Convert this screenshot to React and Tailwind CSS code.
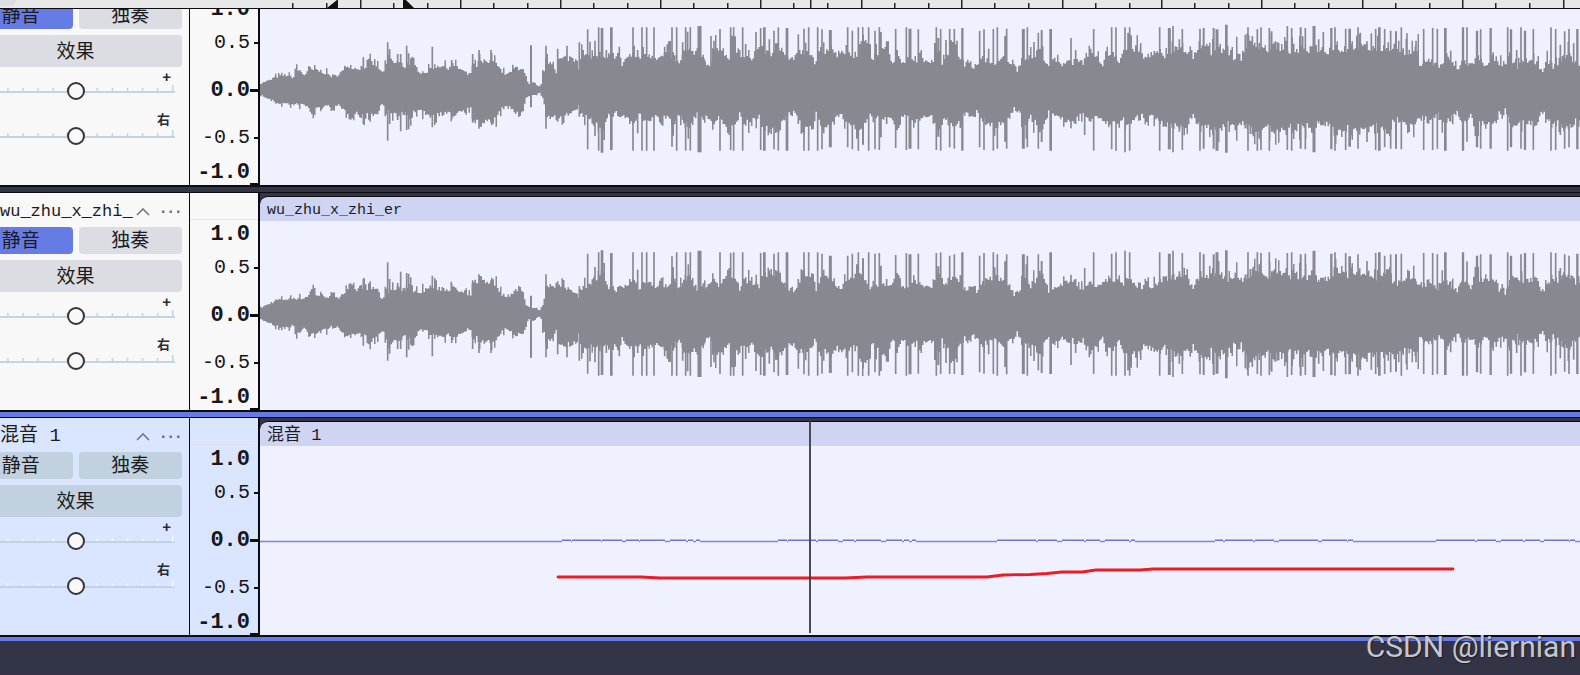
import clsx from 'clsx'

// Waveform sections, in thirds of a pixel. Silence sits at y = MID.
// top / bottom are [x, y] envelopes, hits are [x, top, bottom, width] peaks.
const MID = 267
const SECTIONS = [
  {
    start: -15,
    end: 1350,
    top: [[15, 250], [45, 240], [60, 230], [90, 225], [115, 232], [118, 204], [135, 214], [145, 225], [160, 210], [180, 210], [200, 214], [220, 225], [235, 232], [250, 220], [265, 212], [275, 192], [300, 205], [325, 200], [345, 187], [365, 195], [378, 220], [390, 200], [404, 170], [412, 190], [425, 186], [450, 200], [465, 182], [478, 200], [495, 215], [515, 215], [530, 200], [560, 195], [570, 205], [590, 194], [610, 205], [635, 222], [642, 232], [650, 192], [660, 200], [672, 182], [690, 195], [708, 178], [725, 185], [735, 210], [755, 225], [765, 215], [780, 203], [800, 203], [815, 245], [822, 255], [835, 248], [850, 262], [858, 248], [862, 215], [875, 185], [895, 185], [900, 222], [908, 182], [935, 172], [965, 175], [968, 212], [975, 150], [985, 160], [995, 175], [1010, 158], [1025, 168], [1050, 180], [1065, 172], [1085, 158], [1098, 195], [1110, 175], [1130, 162], [1150, 172], [1165, 158], [1190, 165], [1215, 175], [1235, 155], [1255, 168], [1272, 198], [1280, 158], [1310, 155], [1328, 180], [1340, 160], [1350, 170]],
    bottom: [[15, 285], [45, 300], [60, 308], [90, 312], [118, 316], [145, 315], [160, 325], [175, 356], [182, 325], [220, 320], [250, 320], [265, 332], [275, 342], [300, 338], [325, 355], [345, 342], [365, 345], [378, 310], [390, 330], [412, 342], [425, 350], [450, 340], [465, 356], [478, 335], [500, 338], [530, 350], [560, 345], [590, 345], [620, 330], [642, 320], [655, 360], [675, 375], [690, 365], [710, 368], [725, 355], [740, 325], [770, 325], [790, 350], [800, 340], [812, 295], [822, 286], [835, 285], [855, 278], [862, 300], [875, 360], [885, 355], [905, 358], [925, 345], [955, 340], [968, 320], [980, 355], [1000, 358], [1020, 372], [1045, 385], [1060, 345], [1085, 342], [1110, 350], [1130, 375], [1150, 345], [1175, 375], [1195, 345], [1215, 368], [1235, 345], [1250, 388], [1270, 342], [1290, 382], [1310, 375], [1325, 340], [1350, 370]],
    hits: [[325, 172, 372], [398, 127, 422, 5], [404, 148, 372], [428, 162, 360], [437, 162, 394], [455, 137, 390], [461, 160, 388], [532, 140, 382], [590, 180, 358], [653, 162, 368], [672, 150, 386], [708, 150, 368, 5], [828, 136, 322, 6], [873, 137, 386], [908, 146, 360], [936, 137, 340], [973, 127, 350], [998, 88, 448], [1005, 125, 358], [1020, 122, 408], [1031, 82, 452], [1041, 84, 458, 8], [1054, 150, 350], [1069, 82, 450, 8], [1093, 140, 345], [1134, 82, 452], [1148, 150, 400], [1161, 82, 452], [1175, 82, 452], [1197, 82, 452], [1229, 140, 345], [1251, 82, 440], [1265, 82, 452], [1283, 127, 360], [1292, 82, 452], [1298, 95, 380], [1306, 82, 452], [1333, 78, 457, 11]],
  },
  {
    start: 1320,
    end: 1320,
    top: [[0, 165], [28, 200], [40, 150], [60, 132], [80, 180], [95, 142], [120, 160], [150, 178], [170, 145], [200, 152], [220, 160], [245, 140], [270, 180], [290, 160], [320, 155], [348, 190], [370, 152], [390, 130], [405, 165], [420, 147], [450, 165], [470, 155], [490, 112], [504, 120], [510, 180], [530, 156], [560, 150], [575, 190], [590, 148], [610, 198], [630, 165], [650, 176], [670, 175], [690, 195], [710, 142], [725, 185], [750, 150], [770, 158], [790, 200], [800, 180], [825, 208], [835, 175], [850, 175], [870, 190], [890, 195], [910, 170], [930, 185], [950, 208], [965, 168], [980, 170], [1000, 168], [1020, 148], [1045, 200], [1060, 175], [1080, 195], [1100, 178], [1113, 190], [1130, 165], [1145, 205], [1160, 180], [1175, 150], [1190, 180], [1205, 192], [1215, 162], [1240, 156], [1255, 182], [1270, 150], [1300, 142], [1320, 150]],
    bottom: [[0, 340], [40, 365], [60, 348], [65, 378], [90, 398], [100, 380], [120, 342], [130, 376], [150, 360], [180, 352], [185, 390], [210, 398], [240, 385], [260, 345], [280, 335], [300, 368], [340, 385], [347, 330], [355, 372], [400, 380], [405, 345], [430, 355], [450, 382], [480, 385], [500, 370], [510, 345], [540, 355], [570, 345], [590, 395], [613, 335], [640, 382], [660, 350], [690, 350], [710, 395], [730, 355], [755, 388], [780, 355], [800, 342], [820, 362], [828, 325], [840, 358], [880, 378], [920, 360], [942, 325], [960, 345], [975, 385], [990, 352], [1020, 395], [1045, 338], [1080, 345], [1110, 380], [1140, 338], [1165, 366], [1185, 345], [1220, 375], [1260, 360], [1290, 375], [1320, 340]],
    hits: [[2, 78, 457], [33, 108, 350], [42, 122, 370], [60, 87, 452], [92, 82, 450], [101, 82, 452], [128, 82, 452], [137, 132, 370], [168, 96, 362], [182, 84, 450], [193, 82, 452, 8], [208, 118, 398], [222, 92, 448], [235, 82, 452], [261, 84, 452, 8], [295, 103, 368], [312, 86, 452], [326, 82, 452], [353, 82, 452], [366, 88, 448], [391, 90, 442, 9], [443, 82, 442], [457, 92, 448], [475, 82, 452], [489, 104, 434, 6], [506, 82, 452], [525, 92, 448], [538, 82, 450], [543, 96, 412], [560, 124, 372], [587, 87, 444], [619, 82, 450], [630, 86, 446, 9], [655, 88, 448], [709, 82, 450], [715, 114, 410, 6], [722, 87, 452], [738, 120, 360], [749, 87, 442], [763, 87, 446], [771, 122, 365], [787, 84, 452, 7], [839, 92, 442], [852, 88, 450], [866, 146, 370], [880, 87, 452], [892, 82, 446], [915, 108, 425], [920, 86, 446], [970, 87, 446, 9], [982, 82, 442], [1002, 126, 362], [1015, 98, 446], [1025, 90, 426, 6], [1052, 87, 452, 8], [1113, 114, 385], [1127, 150, 372], [1154, 175, 405], [1172, 146, 365], [1181, 87, 452], [1235, 82, 448], [1248, 82, 452], [1275, 82, 457], [1284, 98, 372], [1289, 82, 452]],
  },
  {
    start: 2640,
    end: 1325,
    top: [[0, 140], [10, 180], [25, 160], [55, 162], [64, 180], [80, 147], [110, 142], [135, 160], [150, 132], [158, 185], [175, 147], [200, 135], [210, 160], [235, 120], [245, 150], [260, 142], [280, 175], [290, 145], [302, 176], [312, 135], [345, 127], [380, 150], [400, 132], [430, 145], [463, 152], [480, 146], [510, 145], [540, 147], [560, 150], [590, 132], [600, 150], [640, 132], [660, 142], [690, 146], [720, 142], [750, 136], [780, 150], [820, 158], [832, 132], [838, 198], [850, 180], [875, 185], [895, 200], [920, 175], [955, 208], [965, 180], [990, 195], [1010, 172], [1035, 195], [1050, 170], [1065, 182], [1095, 200], [1105, 175], [1130, 200], [1150, 172], [1170, 185], [1190, 190], [1205, 210], [1220, 180], [1240, 200], [1260, 176], [1285, 157], [1300, 185], [1325, 205]],
    bottom: [[0, 330], [12, 372], [28, 338], [55, 366], [90, 382], [120, 388], [140, 370], [158, 350], [180, 385], [210, 378], [235, 405], [265, 365], [285, 385], [305, 365], [330, 398], [355, 405], [380, 380], [405, 400], [430, 380], [455, 388], [490, 378], [520, 395], [535, 370], [565, 378], [580, 398], [605, 400], [620, 380], [635, 410], [655, 370], [680, 400], [710, 375], [745, 405], [760, 360], [790, 360], [815, 380], [835, 355], [870, 365], [890, 342], [910, 378], [930, 352], [950, 335], [970, 375], [988, 342], [1005, 385], [1030, 365], [1050, 378], [1070, 345], [1095, 330], [1110, 378], [1140, 376], [1165, 370], [1185, 376], [1205, 328], [1225, 360], [1250, 370], [1280, 392], [1300, 370], [1325, 350]],
    hits: [[2, 135, 330], [59, 82, 452], [88, 84, 448, 9], [99, 78, 457], [118, 118, 395], [127, 87, 450], [180, 86, 452], [191, 84, 446, 6], [221, 84, 446, 6], [231, 88, 452, 9], [259, 74, 458, 8], [316, 104, 385], [324, 82, 452], [337, 108, 402], [352, 87, 452], [363, 82, 450], [388, 84, 452], [395, 94, 395], [406, 124, 402], [442, 78, 450], [455, 84, 452], [482, 82, 446, 6], [496, 84, 448], [522, 78, 457, 9], [536, 118, 370], [550, 96, 376], [574, 84, 448, 7], [585, 82, 452], [617, 86, 450], [629, 86, 440, 8], [654, 82, 446], [661, 98, 370], [681, 124, 426], [694, 100, 380], [707, 87, 450], [718, 82, 452, 8], [734, 87, 442], [752, 92, 446], [768, 94, 446, 6], [784, 82, 448], [801, 100, 370], [828, 122, 365], [851, 87, 450], [878, 84, 450], [892, 87, 446], [916, 84, 452, 8], [932, 152, 365], [969, 82, 452, 7], [981, 82, 425], [1011, 92, 442, 7], [1022, 88, 446], [1052, 84, 446, 7], [1103, 82, 452], [1113, 88, 442, 7], [1130, 150, 375], [1143, 82, 446], [1155, 92, 450, 7], [1180, 87, 450], [1233, 82, 452], [1247, 87, 450], [1261, 134, 405], [1274, 94, 446], [1287, 87, 442], [1301, 130, 375], [1312, 87, 448, 7]],
  },
]

const STEP = 4.5

function valueAt(points, x) {
  const next = points.findIndex((p) => p[0] >= x)
  if (next === -1) return points[points.length - 1][1]
  if (next === 0) return points[0][1]
  const [x0, y0] = points[next - 1]
  const [x1, y1] = points[next]
  return y0 + ((y1 - y0) * (x - x0)) / (x1 - x0)
}

function buildSamples() {
  const samples = []
  let seed = 7
  // Mostly small changes, now and then a taller peak
  const jitter = () => {
    seed = (seed * 16807) % 2147483647
    const r = seed / 2147483647
    return r > 0.86 ? 0.16 + (r - 0.86) * 1.4 : (r - 0.5) * 0.26
  }
  for (const s of SECTIONS) {
    for (let x = s.top[0][0]; x < s.end; x += STEP) {
      const top = valueAt(s.top, x)
      const bottom = valueAt(s.bottom, x)
      samples.push({
        x: s.start + x,
        w: STEP,
        up: (MID - top) * (1 + jitter()),
        down: (bottom - MID) * (1 + jitter()),
      })
    }
    for (const [x, top, bottom, w = 5] of s.hits) {
      samples.push({ x: s.start + x - w / 2, w, up: MID - top, down: bottom - MID })
    }
  }
  return samples
}

const SAMPLES = buildSamples()

function Waveform({ inverted }) {
  const d = SAMPLES.map(({ x, w, up, down }) => {
    const above = Math.round(inverted ? down : up)
    const below = Math.round(inverted ? up : down)
    return `M${x} ${279 - above}h${w}v${above + below}h${-w}z`
  }).join('')
  return (
    <svg viewBox="0 0 3960 567" preserveAspectRatio="none" className="block w-full h-full" aria-hidden="true">
      <path d={d} fill="#888890" />
    </svg>
  )
}

// Stretches where the quiet track lifts off the zero line
const BLIPS = [
  [302, 311], [312, 341], [342, 362], [366, 379], [380, 405], [410, 426], [428, 433], [436, 440],
  [518, 527], [528, 556], [558, 578], [583, 594], [596, 621], [626, 642], [644, 649], [652, 656],
  [737, 776], [778, 797], [802, 824], [826, 840], [845, 869], [871, 875],
  [955, 963], [965, 993], [995, 1014], [1019, 1058], [1062, 1087], [1088, 1093],
  [1176, 1215], [1217, 1236], [1241, 1263], [1265, 1280], [1284, 1309], [1310, 1315],
]

function QuietLine() {
  let base = 'M0 95.5'
  let raised = ''
  for (const [a, b] of BLIPS) {
    base += `H${a}M${b} 95.5`
    raised += `M${a} 94.3H${b}`
  }
  base += 'H1320'
  return (
    <svg viewBox="0 0 1320 189" preserveAspectRatio="none" className="block w-full h-full" aria-hidden="true">
      <path d={base} fill="none" stroke="#8483dc" strokeWidth="1.4" />
      <path d={raised} fill="none" stroke="#7271cf" strokeWidth="1.4" />
      <path
        d="M298 131H381L400 132H585L607 131H727L743 129L770 128.500L787 127.500L802 126H822L836 124H880L893 123H1193"
        fill="none"
        stroke="#ed1c24"
        strokeWidth="2.8"
        strokeLinecap="round"
      />
    </svg>
  )
}

const RULER_START = 260
const MAJOR = [360, 460, 560, 660, 760, 861, 961, 1062, 1161, 1261, 1362, 1462, 1563]

function TimeRuler() {
  return (
    <header className="flex h-2 shrink-0 bg-[#e8e8e9]">
      <div className="w-[260px] shrink-0">
        <div className="h-1.5 w-4 rounded-br-lg bg-[#dcdce2]" />
      </div>
      <svg viewBox="0 0 1320 8" preserveAspectRatio="none" className="h-2 flex-1 min-w-0" aria-hidden="true">
        <g fill="#26262b">
          <rect x="32" y="3" width="1.500" height="5" />
          <rect x="66" y="3" width="1.500" height="5" />
          {MAJOR.map((x) => (
            <g key={x}>
              <rect x={x - RULER_START} y="0" width="1.500" height="8" />
              <rect x={x - RULER_START + 33} y="3" width="1.500" height="5" />
              <rect x={x - RULER_START + 67} y="3" width="1.500" height="5" />
            </g>
          ))}
          <rect x="550" y="0" width="1.500" height="8" />
          <path d="M67 8L77 0H78V8zM143 0H146L154 8H143z" fill="#111116" />
        </g>
      </svg>
    </header>
  )
}

function TrackButton({ active, selected, className, children }) {
  return (
    <button
      type="button"
      aria-pressed={active}
      className={clsx(
        'rounded-[4px] text-[19px] leading-none text-[#1b1b22]',
        active ? 'bg-[#677be4]' : selected ? 'bg-[#c1d1df]' : 'bg-[#dcdde3]',
        className,
      )}
    >
      {children}
    </button>
  )
}

const TICKS = Array.from({ length: 14 }, (_, i) => i)

function TrackSlider({ name, mark, markClass, selected }) {
  return (
    <label className="block h-[45px]">
      <span className={clsx('block h-[15px] text-right font-bold leading-[15px] text-[#2b2b32]', markClass)}>{mark}</span>
      <span className="grid h-[18px]">
        <svg viewBox="0 0 212 18" preserveAspectRatio="none" className="col-start-1 row-start-1 h-[18px] w-full" aria-hidden="true">
          <rect x="6" y="9" width="199" height="2" fill={selected ? '#c3d2e2' : '#c3d4e2'} />
          {TICKS.map((i) => (
            <rect
              key={i}
              x={Math.round(8 + i * 14.9)}
              y={i === 13 ? 3 : 6}
              width="1.5"
              height={i === 13 ? 7 : 3}
              fill={selected ? '#f4f7fc' : '#c3d4e2'}
            />
          ))}
        </svg>
        <input
          type="range"
          min="-100"
          max="100"
          defaultValue="0"
          aria-label={name}
          className="col-start-1 row-start-1 h-[18px] w-full appearance-none bg-transparent [&::-webkit-slider-thumb]:size-[18px] [&::-webkit-slider-thumb]:appearance-none [&::-webkit-slider-thumb]:rounded-full [&::-webkit-slider-thumb]:border-2 [&::-webkit-slider-thumb]:border-solid [&::-webkit-slider-thumb]:border-[#35353a] [&::-webkit-slider-thumb]:bg-[#f8f8f8]"
        />
      </span>
    </label>
  )
}

function TrackPanel({ name, nameClass, muted, selected }) {
  return (
    <div className={clsx('w-[189px] shrink-0 overflow-hidden', selected ? 'bg-[#dae6ff]' : 'bg-[#f8f8f8]')}>
      <div className="-ml-[31px] mr-[7px]">
        <div className="flex h-[34px] items-center pl-[31px] pr-[2px] pt-[3px]">
          <span
            className={clsx(
              "w-[136px] whitespace-nowrap font-['Liberation_Mono','Noto_Sans_CJK_SC',monospace] leading-none text-[#1b1b22]",
              nameClass,
            )}
          >
            {name}
          </span>
          <button type="button" aria-label="Collapse" className="shrink-0">
            <svg width="14" height="8" viewBox="0 0 14 8" fill="none" stroke="#777" strokeWidth="1.6">
              <path d="M1 7L7 1L13 7" />
            </svg>
          </button>
          <button type="button" aria-label="Menu" className="ml-auto shrink-0">
            <svg width="18" height="4" viewBox="0 0 18 4" fill="#777">
              <path d="M0 .5h2.500v2.500H0zM7.500 .5h2.500v2.500h-2.500zM15 .5h2.500v2.500h-2.500z" />
            </svg>
          </button>
        </div>
        <div className="flex gap-1.5">
          <TrackButton active={muted} selected={selected} className="h-[27px] flex-1">静音</TrackButton>
          <TrackButton selected={selected} className="h-[27px] flex-1">独奏</TrackButton>
        </div>
        <TrackButton selected={selected} className="mt-1.5 block h-[32px] w-full">效果</TrackButton>
        <TrackSlider name="Gain" mark="+" markClass="text-[15px] pr-[11px] pt-[2px]" selected={selected} />
        <TrackSlider name="Pan" mark="右" markClass="text-[13px] pr-[12px]" selected={selected} />
      </div>
    </div>
  )
}

const LEVELS = [
  { text: '1.0', bold: true, row: 'h-7' },
  { text: '0.5', row: 'h-10', tick: 'h-0.5 w-1' },
  { text: '0.0', bold: true, row: 'h-[54px]', tick: 'h-[3px] w-2' },
  { text: '-0.5', row: 'h-[42px]', tick: 'h-0.5 w-1' },
  { text: '-1.0', bold: true, row: 'h-[26px]', tick: 'h-0.5 w-2 self-end' },
]

function LevelRuler({ selected }) {
  return (
    <div
      className={clsx(
        "flex w-[71px] shrink-0 flex-col border-l border-r-2 border-[#0c0c10] font-['Liberation_Mono',monospace] text-[#17171c]",
        selected ? 'bg-[#dae6ff]' : 'bg-[#f8f8f8]',
      )}
    >
      <div className={clsx('h-[27px] shrink-0 border-b', selected ? 'border-[#e0e0e6]' : 'border-[#e2e2ea]')} />
      {LEVELS.map(({ text, bold, row, tick }) => (
        <div key={text} className={clsx('flex shrink-0 items-center justify-end', row)}>
          <span className={clsx('leading-none', bold ? 'pt-0.5 text-[22px] font-bold' : 'text-[20px]')}>{text}</span>
          <span className="flex w-2 justify-end self-stretch items-center">
            {tick && <span className={clsx('bg-[#0c0c10]', tick)} />}
          </span>
        </div>
      ))}
    </div>
  )
}

function Clip({ title, titleClass, children, cursor }) {
  return (
    <div className="relative flex min-w-0 flex-1 flex-col bg-[#333546] pt-[3px]">
      <div className="flex h-[25px] shrink-0 items-center overflow-hidden rounded-tl-lg border-t border-[#0c0c10] bg-[#ced4f2] pl-[7px]">
        <span
          className={clsx(
            "whitespace-nowrap pt-0.5 font-['Liberation_Mono','Noto_Sans_CJK_SC',monospace] leading-none text-[#1b1b22]",
            titleClass,
          )}
        >
          {title}
        </span>
      </div>
      <div className="h-[189px] bg-[#eff1ff]">{children}</div>
      {cursor && <div className="absolute bottom-0.5 left-[41.6%] top-0.5 w-0.5 bg-[#3b3b44]/90" />}
    </div>
  )
}

function Track({ name, nameClass, title, titleClass, muted, selected, cursor, children }) {
  return (
    <section className="flex h-[217px] shrink-0">
      <TrackPanel name={name} nameClass={nameClass} muted={muted} selected={selected} />
      <LevelRuler selected={selected} />
      <Clip title={title} titleClass={titleClass} cursor={cursor}>
        {children}
      </Clip>
    </section>
  )
}

export default function App() {
  return (
    <div className="relative flex min-h-screen flex-col overflow-hidden bg-[#333546] font-['Liberation_Sans','Noto_Sans_CJK_SC',sans-serif]">
      <TimeRuler />
      {/* First track is scrolled partly under the ruler */}
      <div className="flex h-[177px] shrink-0 flex-col justify-end overflow-hidden border-t border-[#0c0c10]">
        <Track name="wu_zhu_x_zhi_" nameClass="text-[17px]" title="wu_zhu_x_zhi_er" titleClass="text-[15px]" muted>
          <Waveform />
        </Track>
      </div>
      <div className="h-2 shrink-0 border-b border-t-2 border-[#0c0c10] bg-[#333546]" />
      <Track name="wu_zhu_x_zhi_" nameClass="text-[17px]" title="wu_zhu_x_zhi_er" titleClass="text-[15px]" muted>
        <Waveform inverted />
      </Track>
      <div className="h-2 shrink-0 border-b border-t-2 border-[#0c0c10] bg-[#667ae3]" />
      <Track name="混音 1" nameClass="text-[19px]" title="混音 1" titleClass="text-[17px]" selected cursor>
        <QuietLine />
      </Track>
      <div className="h-1.5 shrink-0 border-t-2 border-[#0c0c10] bg-[#667ae3]" />
      <p className="absolute bottom-2.5 right-1 font-[Roboto,sans-serif] text-[30px] leading-9 text-[#c6c7cb] [text-shadow:1px_1px_1px_rgba(0,0,0,0.5)]">
        CSDN @liernian
      </p>
    </div>
  )
}
